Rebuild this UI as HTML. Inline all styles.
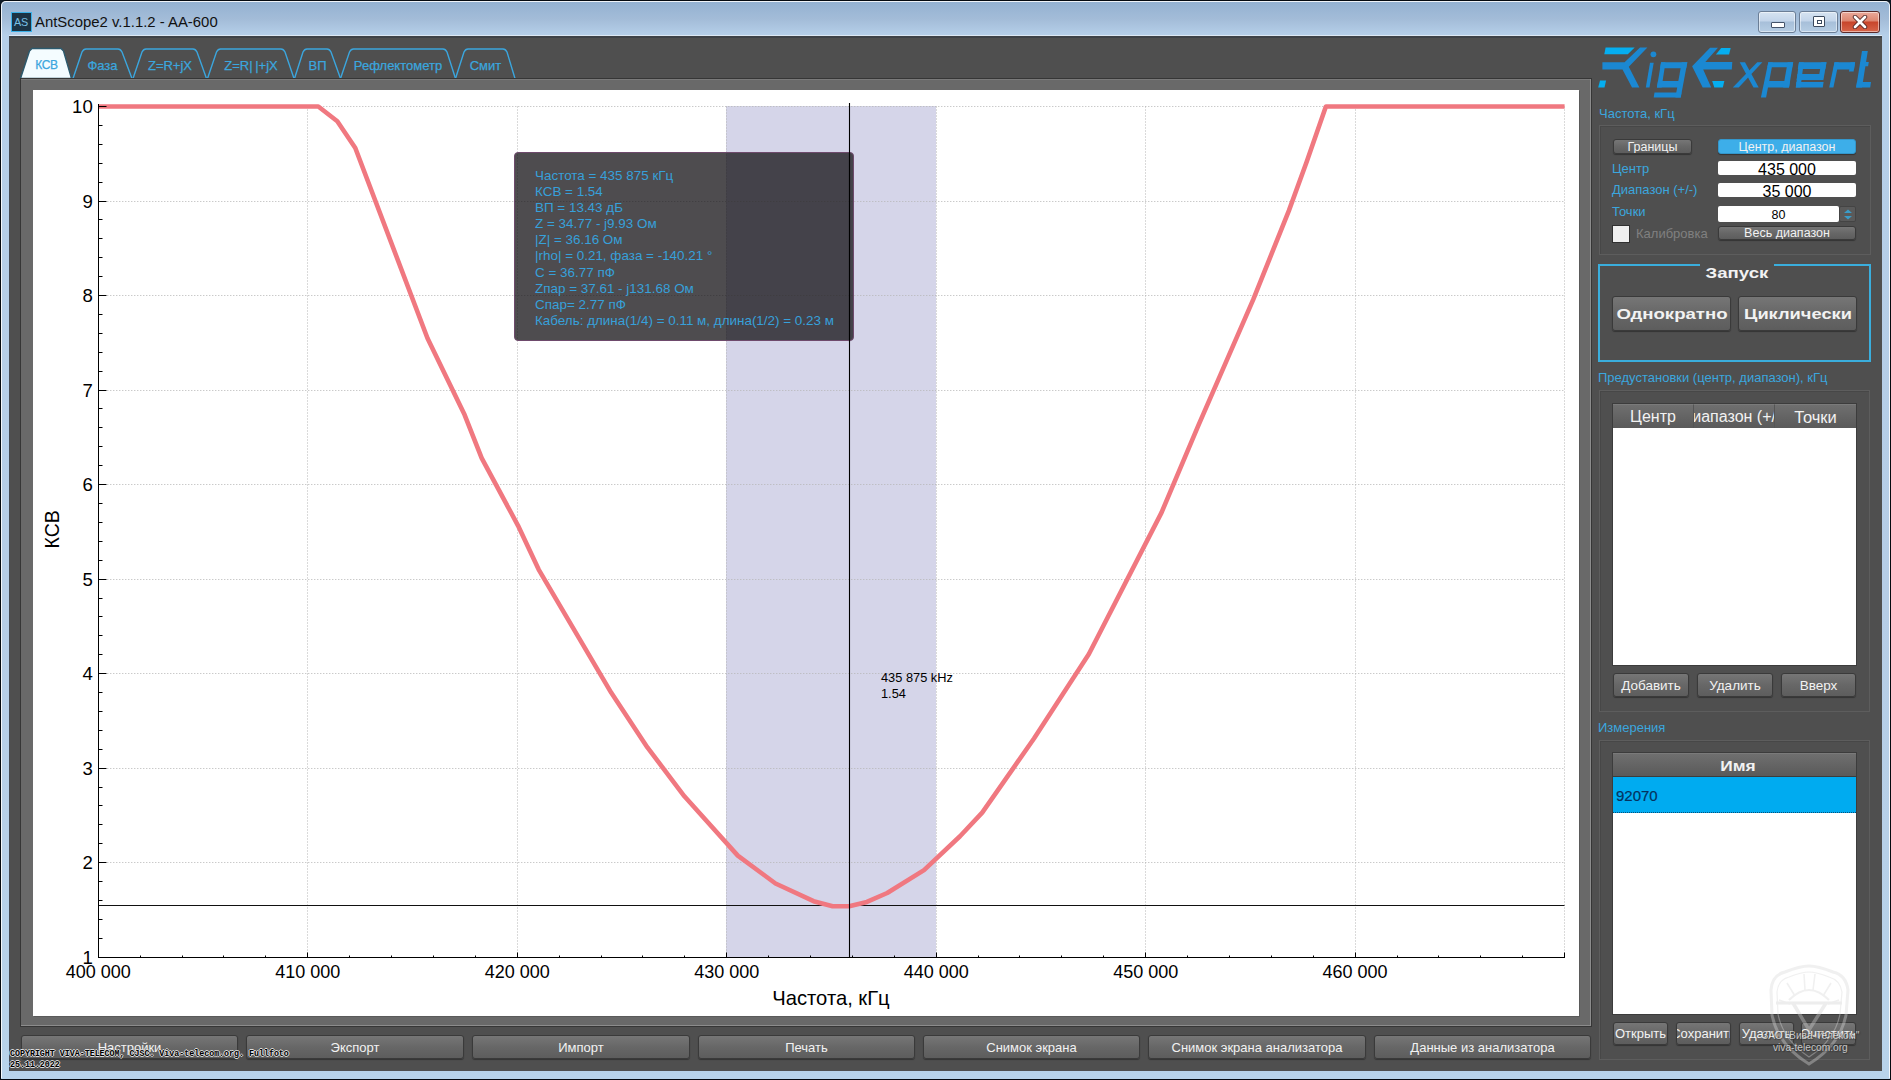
<!DOCTYPE html>
<html><head><meta charset="utf-8">
<style>
html,body{margin:0;padding:0;}
body{width:1891px;height:1080px;overflow:hidden;position:relative;background:#0e1a26;font-family:"Liberation Sans",sans-serif;}
.abs{position:absolute;}
#frame{position:absolute;left:0;top:0;width:1889px;height:1078px;border:1px solid #050a10;border-radius:6px 6px 0 0;
 background:linear-gradient(to bottom,#93b1d1 0px,#a3bcd8 18px,#b5cfe9 34px,#b6cde6 600px,#b8d3ea 1080px);}
#frame2{position:absolute;left:1px;top:1px;width:1887px;height:1076px;border:1px solid rgba(255,255,255,0.85);border-radius:5px 5px 0 0;border-bottom:none;}
#client{position:absolute;left:9px;top:36px;width:1873px;height:1035px;background:#4f4f4f;box-sizing:border-box;border-top:2px solid #3e4247;border-left:1px solid #474b52;box-shadow:0 -1px 0 #dce8f4;}
.title{position:absolute;left:35px;top:14px;font-size:14.9px;color:#111;white-space:nowrap;letter-spacing:0px;}
.wbtn{position:absolute;top:11px;height:20px;border:1px solid #6b7e96;border-radius:3px;
 background:linear-gradient(to bottom,#d6e3f1 0%,#c3d5ea 45%,#a7bfd9 50%,#b6cde4 100%);box-shadow:inset 0 0 0 1px rgba(255,255,255,0.5);}
.wclose{border-color:#5a2a2a;background:linear-gradient(to bottom,#eaa99a 0%,#dd8670 45%,#c8452b 50%,#d7654a 100%);}
.chartframe{position:absolute;left:20px;top:78px;width:1572px;height:949px;background:#696969;border:1px solid #363636;box-sizing:border-box;box-shadow:inset -1px -1px 0 #8c8c8c,inset 0 1px 0 #7a7a7a;}
.plot{position:absolute;left:33px;top:90px;width:1546px;height:926px;background:#fff;box-shadow:1px 1px 0 #5a5a5a;}
svg.full{position:absolute;left:0;top:0;width:1891px;height:1080px;}
.g{stroke:#b4b4b4;stroke-width:1;stroke-dasharray:1 2;}
.a{stroke:#000;stroke-width:1;}
.yl{font-size:18.6px;fill:#000;}
.xl{font-size:18px;fill:#000;}
.blue{color:#3ba6de;}
.lbl{position:absolute;font-size:13px;color:#3ba6de;white-space:nowrap;}
.btn{position:absolute;box-sizing:border-box;border:1px solid #3a3a3a;border-radius:3px;
 background:linear-gradient(to bottom,#767676 0%,#676767 50%,#5d5d5d 100%);color:#f2f2f2;text-align:center;white-space:nowrap;overflow:hidden;
 box-shadow:0 1px 1px rgba(0,0,0,0.35);}
.inp{position:absolute;box-sizing:border-box;background:#fff;border-radius:2px;color:#000;text-align:center;white-space:nowrap;}
.gbox{position:absolute;box-sizing:border-box;border:1px solid #5d5d5d;box-shadow:inset 1px 1px 0 #474747;}
.hdr{position:absolute;box-sizing:border-box;background:linear-gradient(to bottom,#6f6f6f 0%,#626262 60%,#5a5a5a 100%);color:#f2f2f2;text-align:center;white-space:nowrap;overflow:hidden;border-top:1px solid #7a7a7a;}
.tip{position:absolute;left:514px;top:152px;width:340px;height:189px;box-sizing:border-box;background:rgba(22,20,24,0.76);border:1px solid #6e4a6c;border-radius:4px;}
.tiptext{position:absolute;left:535px;top:168px;font-size:13.45px;line-height:16.1px;color:#37a0da;white-space:nowrap;}
.copy{position:absolute;font-family:"Liberation Mono",monospace;font-size:8.3px;font-weight:bold;color:#000;white-space:pre;line-height:10.5px;
 text-shadow:1px 0 0 #ddd,-1px 0 0 #ddd,0 1px 0 #ddd,0 -1px 0 #ddd;}
.cc{position:absolute;left:50%;top:0;transform:translateX(-50%);white-space:nowrap;}
.wm{position:absolute;font-size:10.2px;line-height:12px;color:#f0f0f0;white-space:nowrap;text-shadow:0 0 1px #222,1px 1px 1px #333;opacity:0.75;}
.sx{position:absolute;left:50%;top:0;white-space:nowrap;display:inline-block;}
</style></head>
<body>
<div id="frame"></div>
<div id="frame2"></div>
<!-- app icon -->
<div class="abs" style="left:12px;top:13px;width:19px;height:18px;background:#1c3344;box-shadow:0 0 0 1px #3ab0e8;"></div>
<div class="abs" style="left:14px;top:16px;font-size:10.8px;color:#78c0e6;line-height:12px;letter-spacing:-0.3px;">AS</div>
<div class="title">AntScope2 v.1.1.2 - AA-600</div>
<div class="wbtn" style="left:1758px;width:36px;"><div class="abs" style="left:12px;top:10px;width:12px;height:4px;background:#fff;border:1px solid #44536a;border-radius:1px;"></div></div>
<div class="wbtn" style="left:1799px;width:37px;"><div class="abs" style="left:13px;top:4px;width:10px;height:9px;background:#fff;border:1px solid #3c4a5e;border-radius:1px;"><div class="abs" style="left:3px;top:3px;width:3px;height:2px;border:1px solid #3c4a5e;"></div></div></div>
<div class="wbtn wclose" style="left:1840px;width:38px;"><svg class="abs" style="left:11px;top:3px" width="16" height="14" viewBox="0 0 16 14"><path d="M3 2 L13 12 M13 2 L3 12" stroke="#4a2020" stroke-width="4.4" stroke-linecap="round"/><path d="M3 2 L13 12 M13 2 L3 12" stroke="#fff" stroke-width="2.8" stroke-linecap="round"/></svg></div>

<div id="client"></div>

<!-- tabs -->
<svg class="full">
 <polygon points="20.5,78.5 29.5,51 32,48.5 61,48.5 63.5,51 71.5,78.5" fill="#f4fcff" stroke="#2c5a6e" stroke-width="1.4"/>
 <path d="M73,78.5 L82,52 Q83.5,49 86,49 L118,49 Q120.5,49 122,52 L132,78.5" fill="none" stroke="#3ba6de" stroke-width="1.4"/>
 <path d="M133,78.5 L142,52 Q143.5,49 146,49 L193,49 Q195.5,49 197,52 L206.5,78.5" fill="none" stroke="#3ba6de" stroke-width="1.4"/>
 <path d="M207.5,78.5 L216.5,52 Q218,49 220.5,49 L281,49 Q283.5,49 285,52 L294,78.5" fill="none" stroke="#3ba6de" stroke-width="1.4"/>
 <path d="M294.5,78.5 L303,52 Q304.5,49 307,49 L327,49 Q329.5,49 331,52 L340.5,78.5" fill="none" stroke="#3ba6de" stroke-width="1.4"/>
 <path d="M340.5,78.5 L349.5,52 Q351,49 353.5,49 L443,49 Q445.5,49 447,52 L455.5,78.5" fill="none" stroke="#3ba6de" stroke-width="1.4"/>
 <path d="M455.5,78.5 L464,52 Q465.5,49 468,49 L503,49 Q505.5,49 507,52 L515,78.5" fill="none" stroke="#3ba6de" stroke-width="1.4"/>
 <g font-size="13" fill="#3ba6de" stroke="#3ba6de" stroke-width="0.25" text-anchor="middle">
  <text x="46.5" y="69" font-size="12" letter-spacing="-0.3">КСВ</text>
  <text x="102.5" y="70">Фаза</text>
  <text x="170" y="70">Z=R+jX</text>
  <text x="251" y="70">Z=R|&#8201;|+jX</text>
  <text x="317.5" y="70">ВП</text>
  <text x="398" y="70">Рефлектометр</text>
  <text x="485.5" y="70">Смит</text>
 </g>
</svg>

<div class="chartframe"></div>
<div class="plot"></div>
<svg class="full">
<rect x="726" y="106" width="210" height="851" fill="#d5d5e9"/>
<line x1="307.5" y1="106.5" x2="307.5" y2="957.2" class="g"/>
<line x1="517.5" y1="106.5" x2="517.5" y2="957.2" class="g"/>
<line x1="726.5" y1="106.5" x2="726.5" y2="957.2" class="g"/>
<line x1="936.5" y1="106.5" x2="936.5" y2="957.2" class="g"/>
<line x1="1145.5" y1="106.5" x2="1145.5" y2="957.2" class="g"/>
<line x1="1355.5" y1="106.5" x2="1355.5" y2="957.2" class="g"/>
<line x1="1564.5" y1="106.5" x2="1564.5" y2="957.2" class="g"/>
<line x1="98.3" y1="862.5" x2="1564.6" y2="862.5" class="g"/>
<line x1="98.3" y1="768.5" x2="1564.6" y2="768.5" class="g"/>
<line x1="98.3" y1="673.5" x2="1564.6" y2="673.5" class="g"/>
<line x1="98.3" y1="579.5" x2="1564.6" y2="579.5" class="g"/>
<line x1="98.3" y1="484.5" x2="1564.6" y2="484.5" class="g"/>
<line x1="98.3" y1="390.5" x2="1564.6" y2="390.5" class="g"/>
<line x1="98.3" y1="295.5" x2="1564.6" y2="295.5" class="g"/>
<line x1="98.3" y1="201.5" x2="1564.6" y2="201.5" class="g"/>
<line x1="98.3" y1="106.5" x2="1564.6" y2="106.5" class="g"/>
<line x1="98" y1="905.5" x2="1564.5" y2="905.5" stroke="#111" stroke-width="1.2"/>
<polyline fill="none" stroke="#f07880" stroke-width="4.6" stroke-linejoin="round" points="98.3,106.5 318.3,106.5 337.3,121.3 355.3,148.0 427.5,338.3 464.6,414.8 481.7,458.1 518.0,525.6 538.7,569.6 611.3,692.8 647.4,747.4 684.4,796.3 737.8,855.6 775.5,883.5 813.6,901.2 832.6,906.3 849.2,906.3 866.9,901.9 887.2,893.0 924.0,870.1 960.0,836.3 982.2,812.6 1034.0,738.5 1088.9,654.0 1161.5,512.6 1198.5,425.2 1253.3,299.4 1288.9,210.6 1306.7,161.7 1325.9,106.5 1564.6,106.5"/>
<line x1="98.5" y1="104" x2="98.5" y2="957.5" class="a"/>
<line x1="98" y1="957.5" x2="1565" y2="957.5" class="a"/>
<line x1="98" y1="957.5" x2="106.5" y2="957.5" class="a"/>
<line x1="98" y1="938.5" x2="102.5" y2="938.5" class="a"/>
<line x1="98" y1="919.5" x2="102.5" y2="919.5" class="a"/>
<line x1="98" y1="900.5" x2="102.5" y2="900.5" class="a"/>
<line x1="98" y1="881.5" x2="102.5" y2="881.5" class="a"/>
<line x1="98" y1="862.5" x2="106.5" y2="862.5" class="a"/>
<line x1="98" y1="843.5" x2="102.5" y2="843.5" class="a"/>
<line x1="98" y1="824.5" x2="102.5" y2="824.5" class="a"/>
<line x1="98" y1="805.5" x2="102.5" y2="805.5" class="a"/>
<line x1="98" y1="787.5" x2="102.5" y2="787.5" class="a"/>
<line x1="98" y1="768.5" x2="106.5" y2="768.5" class="a"/>
<line x1="98" y1="749.5" x2="102.5" y2="749.5" class="a"/>
<line x1="98" y1="730.5" x2="102.5" y2="730.5" class="a"/>
<line x1="98" y1="711.5" x2="102.5" y2="711.5" class="a"/>
<line x1="98" y1="692.5" x2="102.5" y2="692.5" class="a"/>
<line x1="98" y1="673.5" x2="106.5" y2="673.5" class="a"/>
<line x1="98" y1="654.5" x2="102.5" y2="654.5" class="a"/>
<line x1="98" y1="635.5" x2="102.5" y2="635.5" class="a"/>
<line x1="98" y1="616.5" x2="102.5" y2="616.5" class="a"/>
<line x1="98" y1="598.5" x2="102.5" y2="598.5" class="a"/>
<line x1="98" y1="579.5" x2="106.5" y2="579.5" class="a"/>
<line x1="98" y1="560.5" x2="102.5" y2="560.5" class="a"/>
<line x1="98" y1="541.5" x2="102.5" y2="541.5" class="a"/>
<line x1="98" y1="522.5" x2="102.5" y2="522.5" class="a"/>
<line x1="98" y1="503.5" x2="102.5" y2="503.5" class="a"/>
<line x1="98" y1="484.5" x2="106.5" y2="484.5" class="a"/>
<line x1="98" y1="465.5" x2="102.5" y2="465.5" class="a"/>
<line x1="98" y1="446.5" x2="102.5" y2="446.5" class="a"/>
<line x1="98" y1="427.5" x2="102.5" y2="427.5" class="a"/>
<line x1="98" y1="408.5" x2="102.5" y2="408.5" class="a"/>
<line x1="98" y1="390.5" x2="106.5" y2="390.5" class="a"/>
<line x1="98" y1="371.5" x2="102.5" y2="371.5" class="a"/>
<line x1="98" y1="352.5" x2="102.5" y2="352.5" class="a"/>
<line x1="98" y1="333.5" x2="102.5" y2="333.5" class="a"/>
<line x1="98" y1="314.5" x2="102.5" y2="314.5" class="a"/>
<line x1="98" y1="295.5" x2="106.5" y2="295.5" class="a"/>
<line x1="98" y1="276.5" x2="102.5" y2="276.5" class="a"/>
<line x1="98" y1="257.5" x2="102.5" y2="257.5" class="a"/>
<line x1="98" y1="238.5" x2="102.5" y2="238.5" class="a"/>
<line x1="98" y1="219.5" x2="102.5" y2="219.5" class="a"/>
<line x1="98" y1="201.5" x2="106.5" y2="201.5" class="a"/>
<line x1="98" y1="182.5" x2="102.5" y2="182.5" class="a"/>
<line x1="98" y1="163.5" x2="102.5" y2="163.5" class="a"/>
<line x1="98" y1="144.5" x2="102.5" y2="144.5" class="a"/>
<line x1="98" y1="125.5" x2="102.5" y2="125.5" class="a"/>
<line x1="98" y1="106.5" x2="106.5" y2="106.5" class="a"/>
<line x1="98.5" y1="958" x2="98.5" y2="952.5" class="a"/>
<line x1="140.5" y1="958" x2="140.5" y2="955.5" class="a"/>
<line x1="182.5" y1="958" x2="182.5" y2="955.5" class="a"/>
<line x1="223.5" y1="958" x2="223.5" y2="955.5" class="a"/>
<line x1="265.5" y1="958" x2="265.5" y2="955.5" class="a"/>
<line x1="307.5" y1="958" x2="307.5" y2="952.5" class="a"/>
<line x1="349.5" y1="958" x2="349.5" y2="955.5" class="a"/>
<line x1="391.5" y1="958" x2="391.5" y2="955.5" class="a"/>
<line x1="433.5" y1="958" x2="433.5" y2="955.5" class="a"/>
<line x1="475.5" y1="958" x2="475.5" y2="955.5" class="a"/>
<line x1="517.5" y1="958" x2="517.5" y2="952.5" class="a"/>
<line x1="559.5" y1="958" x2="559.5" y2="955.5" class="a"/>
<line x1="601.5" y1="958" x2="601.5" y2="955.5" class="a"/>
<line x1="642.5" y1="958" x2="642.5" y2="955.5" class="a"/>
<line x1="684.5" y1="958" x2="684.5" y2="955.5" class="a"/>
<line x1="726.5" y1="958" x2="726.5" y2="952.5" class="a"/>
<line x1="768.5" y1="958" x2="768.5" y2="955.5" class="a"/>
<line x1="810.5" y1="958" x2="810.5" y2="955.5" class="a"/>
<line x1="852.5" y1="958" x2="852.5" y2="955.5" class="a"/>
<line x1="894.5" y1="958" x2="894.5" y2="955.5" class="a"/>
<line x1="936.5" y1="958" x2="936.5" y2="952.5" class="a"/>
<line x1="978.5" y1="958" x2="978.5" y2="955.5" class="a"/>
<line x1="1019.5" y1="958" x2="1019.5" y2="955.5" class="a"/>
<line x1="1061.5" y1="958" x2="1061.5" y2="955.5" class="a"/>
<line x1="1103.5" y1="958" x2="1103.5" y2="955.5" class="a"/>
<line x1="1145.5" y1="958" x2="1145.5" y2="952.5" class="a"/>
<line x1="1187.5" y1="958" x2="1187.5" y2="955.5" class="a"/>
<line x1="1229.5" y1="958" x2="1229.5" y2="955.5" class="a"/>
<line x1="1271.5" y1="958" x2="1271.5" y2="955.5" class="a"/>
<line x1="1313.5" y1="958" x2="1313.5" y2="955.5" class="a"/>
<line x1="1355.5" y1="958" x2="1355.5" y2="952.5" class="a"/>
<line x1="1397.5" y1="958" x2="1397.5" y2="955.5" class="a"/>
<line x1="1438.5" y1="958" x2="1438.5" y2="955.5" class="a"/>
<line x1="1480.5" y1="958" x2="1480.5" y2="955.5" class="a"/>
<line x1="1522.5" y1="958" x2="1522.5" y2="955.5" class="a"/>
<line x1="1564.5" y1="958" x2="1564.5" y2="952.5" class="a"/>
<text x="92.8" y="963.7" text-anchor="end" class="yl">1</text>
<text x="92.8" y="869.2" text-anchor="end" class="yl">2</text>
<text x="92.8" y="774.7" text-anchor="end" class="yl">3</text>
<text x="92.8" y="680.1" text-anchor="end" class="yl">4</text>
<text x="92.8" y="585.6" text-anchor="end" class="yl">5</text>
<text x="92.8" y="491.1" text-anchor="end" class="yl">6</text>
<text x="92.8" y="396.6" text-anchor="end" class="yl">7</text>
<text x="92.8" y="302.0" text-anchor="end" class="yl">8</text>
<text x="92.8" y="207.5" text-anchor="end" class="yl">9</text>
<text x="92.8" y="113.0" text-anchor="end" class="yl">10</text>
<text x="98.3" y="977.5" text-anchor="middle" class="xl">400 000</text>
<text x="307.8" y="977.5" text-anchor="middle" class="xl">410 000</text>
<text x="517.2" y="977.5" text-anchor="middle" class="xl">420 000</text>
<text x="726.7" y="977.5" text-anchor="middle" class="xl">430 000</text>
<text x="936.2" y="977.5" text-anchor="middle" class="xl">440 000</text>
<text x="1145.7" y="977.5" text-anchor="middle" class="xl">450 000</text>
<text x="1355.1" y="977.5" text-anchor="middle" class="xl">460 000</text>
<line x1="849.5" y1="103" x2="849.5" y2="957" stroke="#000" stroke-width="1.1"/>
<text x="0" y="0" transform="translate(58.6,548.5) rotate(-90) scale(0.93,1)" font-size="21" fill="#000">КСВ</text>
<text x="831" y="1004.8" text-anchor="middle" font-size="20.2" fill="#000">Частота, кГц</text>
<text x="881" y="682" font-size="12.8" fill="#000">435 875 kHz</text>
<text x="881" y="698" font-size="12.8" fill="#000">1.54</text>
</svg>
<div class="tip"></div>
<div class="tiptext">Частота = 435 875 кГц<br>КСВ = 1.54<br>ВП = 13.43 дБ<br>Z = 34.77 - j9.93 Ом<br>|Z| = 36.16 Ом<br>|rho| = 0.21, фаза = -140.21 °<br>C = 36.77 пФ<br>Zпар = 37.61 - j131.68 Ом<br>Спар= 2.77 пФ<br>Кабель: длина(1/4) = 0.11 м, длина(1/2) = 0.23 м</div>
<svg class="full" style="pointer-events:none"><line x1="849.5" y1="152" x2="849.5" y2="342" stroke="#000" stroke-width="1.1"/></svg>

<!-- bottom buttons -->
<div class="btn" style="left:21px;top:1035px;width:217px;height:24px;font-size:13px;line-height:24px;">Настройки</div>
<div class="btn" style="left:246px;top:1035px;width:218px;height:24px;font-size:13px;line-height:24px;">Экспорт</div>
<div class="btn" style="left:472px;top:1035px;width:218px;height:24px;font-size:13px;line-height:24px;">Импорт</div>
<div class="btn" style="left:698px;top:1035px;width:217px;height:24px;font-size:13px;line-height:24px;">Печать</div>
<div class="btn" style="left:923px;top:1035px;width:217px;height:24px;font-size:13px;line-height:24px;">Снимок экрана</div>
<div class="btn" style="left:1148px;top:1035px;width:218px;height:24px;font-size:13px;line-height:24px;">Снимок экрана анализатора</div>
<div class="btn" style="left:1374px;top:1035px;width:217px;height:24px;font-size:13px;line-height:24px;">Данные из анализатора</div>
<div class="copy" style="left:10px;top:1049px;">COPYRIGHT VIVA-TELECOM, CJSC. Viva-telecom.org. Fullfoto
25.11.2022</div>

<!-- right panel -->
<svg class="full"><polygon points="1605.6,47.4 1634.7,47.4 1627.8,54.3 1604.3,54.3" fill="#05aef0"/><polygon points="1602.4,62.2 1624.6,62.2 1640.0,47.4 1647.4,47.4 1628.8,66.7 1639.4,87.4 1632.0,87.4 1622.5,69.4 1602.4,69.4" fill="#1b88d2"/><polygon points="1600.0,80.5 1606.1,80.5 1604.5,87.6 1598.2,87.6" fill="#05aef0"/><circle cx="1653.4" cy="54.3" r="2.9" fill="#1b88d2"/><polygon points="1650.0,62.8 1653.7,62.8 1649.5,87.4 1645.8,87.4" fill="#1b88d2"/><polygon points="1661.1,62.2 1687.3,62.2 1686.2,68.3 1660.0,68.3" fill="#1b88d2"/><polygon points="1681.7,62.2 1687.3,62.2 1680.7,97.4 1675.4,97.4" fill="#1b88d2"/><polygon points="1661.1,62.2 1665.5,62.2 1661.6,87.4 1656.9,87.4" fill="#1b88d2"/><polygon points="1658.0,81.0 1681.0,81.0 1680.0,87.4 1656.9,87.4" fill="#1b88d2"/><polygon points="1654.5,92.6 1681.5,92.6 1680.7,97.4 1653.7,97.4" fill="#1b88d2"/><polygon points="1710.1,47.7 1718.0,47.7 1705.3,62.0 1732.3,62.0 1731.8,69.4 1703.2,69.4 1711.2,87.4 1702.7,87.4 1692.1,66.2" fill="#1b88d2"/><polygon points="1721.2,48.0 1730.7,48.0 1729.1,54.6 1715.9,54.6" fill="#05aef0"/><polygon points="1712.2,81.0 1724.4,81.0 1722.8,87.4 1714.3,87.4" fill="#05aef0"/><polygon points="1739.7,62.2 1745.0,62.2 1758.7,87.4 1753.5,87.4" fill="#1b88d2"/><polygon points="1757.2,62.2 1762.4,62.2 1738.7,87.4 1732.8,87.4" fill="#1b88d2"/><polygon points="1768.3,62.2 1772.8,62.2 1766.1,97.4 1760.9,97.4" fill="#1b88d2"/><polygon points="1768.3,62.2 1793.2,62.2 1792.3,67.3 1767.4,67.3" fill="#1b88d2"/><polygon points="1787.6,62.2 1793.2,62.2 1789.0,87.4 1783.2,87.4" fill="#1b88d2"/><polygon points="1765.0,81.0 1790.0,81.0 1789.0,87.4 1764.0,87.4" fill="#1b88d2"/><polygon points="1799.0,62.2 1826.5,62.2 1825.3,68.9 1797.8,68.9" fill="#1b88d2"/><polygon points="1799.0,62.2 1803.8,62.2 1800.5,87.4 1795.8,87.4" fill="#1b88d2"/><polygon points="1821.3,62.2 1826.5,62.2 1823.4,80.0 1818.3,80.0" fill="#1b88d2"/><polygon points="1797.5,74.1 1823.4,74.1 1822.4,80.0 1796.6,80.0" fill="#1b88d2"/><polygon points="1796.4,82.0 1823.6,82.0 1822.8,87.4 1795.8,87.4" fill="#1b88d2"/><polygon points="1834.5,62.2 1838.7,62.2 1833.4,87.4 1829.2,87.4" fill="#1b88d2"/><polygon points="1834.5,62.2 1855.1,62.2 1854.0,69.4 1833.4,69.4" fill="#1b88d2"/><polygon points="1850.5,62.2 1855.1,62.2 1853.6,71.5 1849.0,71.5" fill="#1b88d2"/><polygon points="1862.0,50.9 1867.8,50.9 1862.0,87.4 1856.1,87.4" fill="#1b88d2"/><polygon points="1860.5,62.0 1868.8,62.0 1868.1,66.2 1859.9,66.2" fill="#1b88d2"/><polygon points="1857.0,82.0 1871.0,82.0 1870.2,87.4 1856.1,87.4" fill="#1b88d2"/></svg>
<div class="lbl" style="left:1599px;top:106px;">Частота, кГц</div>
<div class="gbox" style="left:1599px;top:125px;width:272px;height:130px;"></div>
<div class="btn" style="left:1613px;top:139px;width:79px;height:15px;font-size:12.5px;line-height:14px;">Границы</div>
<div class="btn" style="left:1718px;top:139px;width:138px;height:15px;font-size:12.5px;line-height:14px;background:#3daee9;border-color:#3397cc;">Центр, диапазон</div>
<div class="lbl" style="left:1612px;top:161px;">Центр</div>
<div class="lbl" style="left:1612px;top:182px;">Диапазон (+/-)</div>
<div class="lbl" style="left:1612px;top:204px;">Точки</div>
<div class="inp" style="left:1718px;top:161px;width:138px;height:14px;font-size:16px;line-height:18px;overflow:hidden;">435 000</div>
<div class="inp" style="left:1718px;top:183px;width:138px;height:14px;font-size:16px;line-height:18px;overflow:hidden;">35 000</div>
<div class="inp" style="left:1718px;top:206px;width:121px;height:16px;font-size:12.5px;line-height:18px;">80</div>
<div class="abs" style="left:1839px;top:206px;width:17px;height:16px;box-sizing:border-box;background:#5a5a5a;border:1px solid #444;border-radius:2px;">
 <svg class="abs" style="left:2px;top:1px" width="12" height="13"><path d="M2,5 L6,1.5 L10,5 Z M2,8 L6,11.5 L10,8 Z" fill="#3a9cc8"/></svg></div>
<div class="abs" style="left:1612px;top:225px;width:16px;height:16px;background:#efefef;border:1px solid #303030;"></div>
<div class="lbl" style="left:1636px;top:226px;color:#808080;">Калибровка</div>
<div class="btn" style="left:1718px;top:226px;width:138px;height:14px;font-size:12.5px;line-height:13px;">Весь диапазон</div>

<div class="abs" style="left:1598px;top:264px;width:273px;height:98px;box-sizing:border-box;border:2px solid #3aaedd;"></div>
<div class="abs" style="left:1700px;top:260px;width:74px;height:8px;background:#4f4f4f;"></div>
<div class="abs" style="left:1706px;top:263px;width:62px;height:20px;font-size:15.5px;line-height:20px;font-weight:bold;color:#f2f2f2;"><span class="sx" style="transform:translateX(-50%) scaleX(1.2);">Запуск</span></div>
<div class="btn" style="left:1612px;top:296px;width:119px;height:35px;font-size:15.5px;font-weight:bold;line-height:33px;"><span class="sx" style="transform:translateX(-50%) scaleX(1.2);">Однократно</span></div>
<div class="btn" style="left:1738px;top:296px;width:119px;height:35px;font-size:15.5px;font-weight:bold;line-height:33px;"><span class="sx" style="transform:translateX(-50%) scaleX(1.18);">Циклически</span></div>

<div class="lbl" style="left:1598px;top:370px;">Предустановки (центр, диапазон), кГц</div>
<div class="gbox" style="left:1599px;top:390px;width:271px;height:322px;"></div>
<div class="abs" style="left:1612px;top:403px;width:245px;height:263px;background:#3c3c3c;"></div>
<div class="hdr" style="left:1613px;top:404px;width:80px;height:24px;font-size:16px;line-height:24px;">Центр</div>
<div class="hdr" style="left:1693px;top:404px;width:81px;height:24px;font-size:16px;line-height:24px;border-left:1px solid #555;"><span style="position:absolute;left:50%;top:0;transform:translateX(-50%);">Диапазон (+/-)</span></div>
<div class="hdr" style="left:1774px;top:404px;width:82px;height:24px;font-size:16.5px;line-height:24px;border-left:1px solid #555;">Точки</div>
<div class="abs" style="left:1613px;top:428px;width:243px;height:237px;background:#fff;"></div>
<div class="btn" style="left:1613px;top:673px;width:76px;height:24px;font-size:13.5px;line-height:24px;">Добавить</div>
<div class="btn" style="left:1697px;top:673px;width:76px;height:24px;font-size:13.5px;line-height:24px;">Удалить</div>
<div class="btn" style="left:1781px;top:673px;width:75px;height:24px;font-size:13.5px;line-height:24px;">Вверх</div>

<div class="lbl" style="left:1598px;top:720px;">Измерения</div>
<div class="gbox" style="left:1599px;top:740px;width:271px;height:320px;"></div>
<div class="abs" style="left:1612px;top:752px;width:245px;height:263px;background:#3c3c3c;"></div>
<div class="hdr" style="left:1613px;top:753px;width:243px;height:23px;font-size:15.5px;line-height:23px;font-weight:bold;"><span class="sx" style="transform:translateX(-50%) scaleX(1.12);margin-left:3px;">Имя</span></div>
<div class="abs" style="left:1613px;top:777px;width:243px;height:237px;background:#fff;"></div>
<div class="abs" style="left:1613px;top:777px;width:243px;height:36px;background:#00abf0;border-bottom:1px dotted #06507a;box-sizing:border-box;"></div>
<div class="abs" style="left:1616px;top:787px;font-size:15px;color:#04325e;-webkit-text-stroke:0.2px #04325e;">92070</div>
<div class="btn" style="left:1613px;top:1022px;width:55px;height:23px;font-size:13px;line-height:22px;"><span class="cc">Открыть</span></div>
<div class="btn" style="left:1676px;top:1022px;width:55px;height:23px;font-size:13px;line-height:22px;"><span class="cc">Сохранить</span></div>
<div class="btn" style="left:1739px;top:1022px;width:55px;height:23px;font-size:13px;line-height:22px;"><span class="cc">Удалить</span></div>
<div class="btn" style="left:1801px;top:1022px;width:55px;height:23px;font-size:13px;line-height:22px;"><span class="cc">Очистить</span></div>
<!-- watermark -->
<svg class="full" style="opacity:0.38">
 <path d="M1771,990 Q1772,975 1785,972 Q1800,966 1809,966 Q1818,966 1833,972 Q1846,975 1848,990 L1846,1015 Q1840,1045 1809,1064 Q1778,1045 1772,1015 Z" fill="none" stroke="#d8d8d8" stroke-width="3"/>
 <path d="M1777,992 Q1778,980 1789,977 Q1802,972 1809,972 Q1816,972 1829,977 Q1840,980 1842,992 L1840,1014 Q1835,1040 1809,1057 Q1783,1040 1778,1014 Z" fill="none" stroke="#d8d8d8" stroke-width="1.2"/>
 <path d="M1789,1000 Q1809,980 1829,1000" fill="none" stroke="#d8d8d8" stroke-width="2"/>
 <path d="M1804,974 L1805,990 M1815,974 L1813,990 M1787,983 L1795,996 M1831,983 L1823,996 M1779,1000 L1790,1004 M1839,1000 L1828,1004" stroke="#d8d8d8" stroke-width="1.5"/>
 <path d="M1776,1003 L1842,1003" stroke="#d0d0d0" stroke-width="3"/>
 <path d="M1793,1003 L1809,1030 L1826,1003" fill="none" stroke="#d0d0d0" stroke-width="3.5"/>
</svg>
<div class="wm" style="left:1762px;top:1030px;">ЗАО "Вива-Телеком"</div>
<div class="wm" style="left:1773px;top:1042px;">viva-telecom.org</div>
</body></html>
